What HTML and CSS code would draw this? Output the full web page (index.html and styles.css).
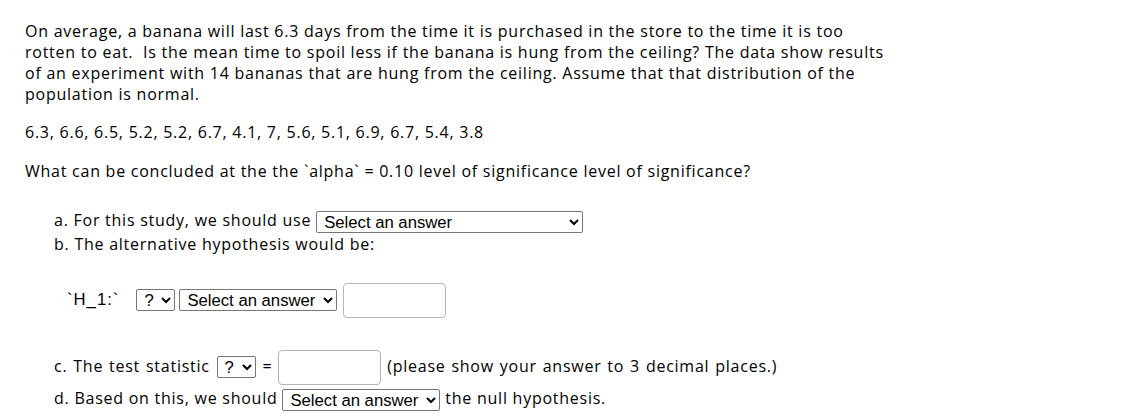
FILE: index.html
```html
<!DOCTYPE html>
<html>
<head>
<meta charset="utf-8">
<link rel="stylesheet" href="styles.css">
</head>
<body>
<div class="question">
  <p class="intro">On average, a banana will last 6.3 days from the time it is purchased in the store to the time it is too<br>rotten to eat.&nbsp; Is the mean time to spoil less if the banana is hung from the ceiling? The data show results<br>of an experiment with 14 bananas that are hung from the ceiling. Assume that that distribution of the<br>population is normal.</p>
  <p class="data">6.3, 6.6, 6.5, 5.2, 5.2, 6.7, 4.1, 7, 5.6, 5.1, 6.9, 6.7, 5.4, 3.8</p>
  <p class="ask">What can be concluded at the the `alpha` = 0.10 level of significance level of significance?</p>
  <div class="parts">
    <div class="line">a. For this study, we should use <select class="sel wide"><option>Select an answer</option></select></div>
    <div class="line">b. The alternative hypothesis would be:</div>
    <div class="hrow">
      <span class="hlabel">`H_1:`</span>
      <select class="sel"><option>?</option></select>
      <select class="sel"><option>Select an answer</option></select>
      <input class="box" type="text">
    </div>
    <div class="line lc">c. The test statistic <select class="sel"><option>?</option></select> <span class="eq">=</span> <input class="box" type="text"> (please show your answer to 3 decimal places.)</div>
    <div class="line ld">d. Based on this, we should <select class="sel"><option>Select an answer</option></select> the null hypothesis.</div>
    <div class="line le">e. Thus, the final conclusion is that ...</div>
  </div>
</div>
</body>
</html>
```

FILE: styles.css
```css
html, body {
  margin: 0;
  padding: 0;
  background: #fff;
}
body {
  font-family: "Open Sans", "Noto Sans", sans-serif;
  font-size: 16px;
  letter-spacing: 0.75px;
  color: #000;
  overflow: hidden;
}
.question {
  padding: 21px 0 0 25px;
  width: 1100px;
  white-space: nowrap;
}
.intro {
  margin: 0;
  line-height: 21px;
}
.data {
  margin: 17px 0 0;
  line-height: 21px;
}
.ask {
  margin: 18px 0 0;
  line-height: 21px;
}
.parts {
  margin-top: 27px;
  padding-left: 29px;
}
.line {
  line-height: 23px;
}
.sel {
  font-family: "Liberation Sans", Arial, sans-serif;
  font-size: 16.7px;
  letter-spacing: 0;
  height: 22px;
  padding: 0 4px 0 3px;
  border: 1px solid #767676;
  border-radius: 2px;
  background: #fff;
  color: #000;
  vertical-align: middle;
}
.wide {
  width: 267px;
}
.hrow {
  display: flex;
  align-items: center;
  gap: 4px;
  margin-top: 27px;
  padding-left: 13px;
}
.hlabel {
  font-family: "Liberation Sans", Arial, sans-serif;
  font-size: 16.7px;
  letter-spacing: 1px;
  margin-right: 13px;
}
.hrow .box {
  margin-left: 2px;
}
.box {
  width: 103px;
  height: 35px;
  box-sizing: border-box;
  border: 1px solid #b5b5b5;
  border-radius: 4px;
  vertical-align: middle;
  font-size: 16px;
}
.lc {
  margin-top: 31px;
  line-height: 35px;
  word-spacing: 1px;
}
.lc .sel {
  margin: 0 1px;
}
.ld {
  margin-top: -2px;
  line-height: 31px;
}
.le {
  line-height: 23px;
}
```
